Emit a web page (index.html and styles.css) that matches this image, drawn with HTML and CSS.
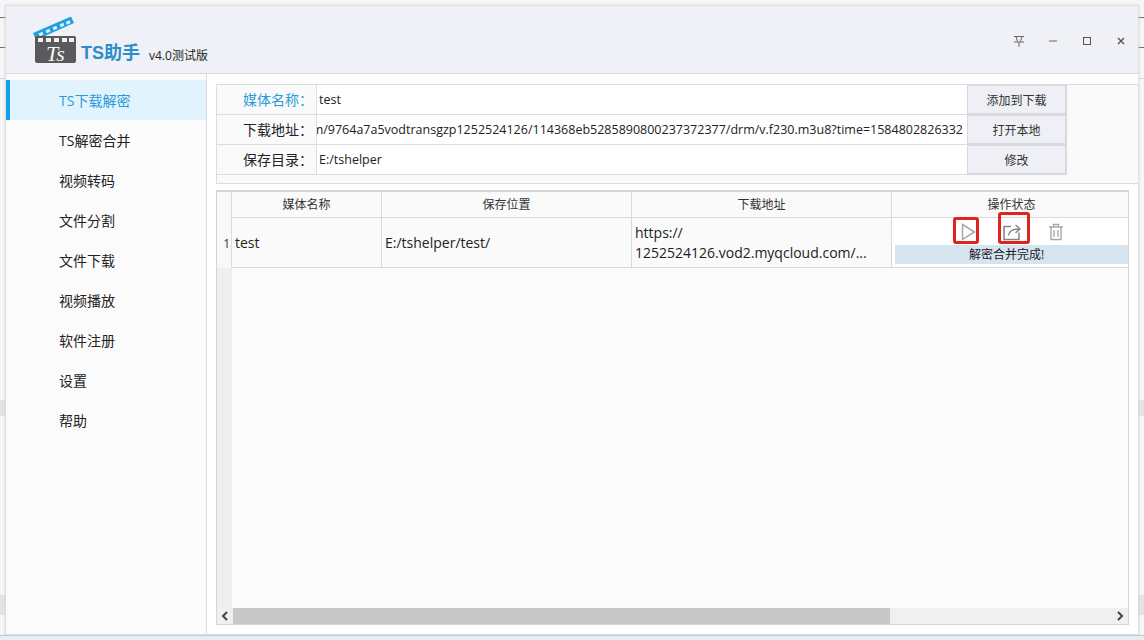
FILE: index.html
```html
<!DOCTYPE html>
<html lang="zh">
<head>
<meta charset="utf-8">
<title>TS助手</title>
<link rel="stylesheet" href="styles.css">
</head>
<body>
<div class="window">
  <header class="titlebar">
    <div class="brand">
      <svg class="logo" width="46" height="50" viewBox="0 0 46 50">
        <polygon points="0,17 38,0.500 41,7 3,24" fill="#1f9fe0"/>
        <g fill="#e8f2fa">
          <rect x="6" y="16.500" width="4" height="3" transform="rotate(-24 8 18)"/>
          <rect x="13" y="13.500" width="4" height="3" transform="rotate(-24 15 15)"/>
          <rect x="20" y="10.500" width="4" height="3" transform="rotate(-24 22 12)"/>
          <rect x="27" y="7.500" width="4" height="3" transform="rotate(-24 29 9)"/>
          <rect x="33" y="5" width="4" height="3" transform="rotate(-24 35 6)"/>
        </g>
        <rect x="2" y="20" width="41" height="27" rx="2" fill="#5a5a5c"/>
        <g fill="#f0f0f0">
          <rect x="5" y="22" width="5" height="4"/>
          <rect x="13" y="22" width="5" height="4"/>
          <rect x="21" y="22" width="5" height="4"/>
          <rect x="29" y="22" width="5" height="4"/>
          <rect x="36" y="22" width="5" height="4"/>
        </g>
        <text x="13" y="45" class="logo-text">Ts</text>
      </svg>
      <span class="app-name">TS助手</span>
      <span class="app-version">v4.0测试版</span>
    </div>
    <div class="controls">
      <svg width="12" height="12" viewBox="0 0 12 12"><path d="M1 1.500h10M3 1.500l1.500 5M9 1.500l-1.500 5M1 7h10M6 7v5" fill="none" stroke="#666" stroke-width="1"/></svg>
      <svg width="12" height="12" viewBox="0 0 12 12"><path d="M2 6h8" stroke="#666" stroke-width="1"/></svg>
      <svg width="12" height="12" viewBox="0 0 12 12"><rect x="2.500" y="2.500" width="7" height="7" fill="none" stroke="#555" stroke-width="1"/></svg>
      <svg width="12" height="12" viewBox="0 0 12 12"><path d="M3 3l6 6M9 3l-6 6" stroke="#555" stroke-width="1.400"/></svg>
    </div>
  </header>
  <div class="body">
    <nav class="sidebar">
      <a class="nav-item active">TS下载解密</a>
      <a class="nav-item">TS解密合并</a>
      <a class="nav-item">视频转码</a>
      <a class="nav-item">文件分割</a>
      <a class="nav-item">文件下载</a>
      <a class="nav-item">视频播放</a>
      <a class="nav-item">软件注册</a>
      <a class="nav-item">设置</a>
      <a class="nav-item">帮助</a>
    </nav>
    <main class="content">
      <section class="form">
        <div class="label accent">媒体名称：</div>
        <div class="field">test</div>
        <button class="btn">添加到下载</button>
        <div class="label">下载地址：</div>
        <div class="field url"><span>https://1252524126.vod2.myqcloud.com/9764a7a5vodtransgzp1252524126/114368eb5285890800237372377/drm/v.f230.m3u8?time=1584802826332</span></div>
        <button class="btn">打开本地</button>
        <div class="label">保存目录：</div>
        <div class="field">E:/tshelper</div>
        <button class="btn">修改</button>
      </section>
      <section class="table">
        <div class="grid">
          <div class="corner"></div>
          <div class="head">媒体名称</div>
          <div class="head">保存位置</div>
          <div class="head">下载地址</div>
          <div class="head">操作状态</div>
          <div class="rownum">1</div>
          <div class="cell">test</div>
          <div class="cell">E:/tshelper/test/</div>
          <div class="cell link">https://<br>1252524126.vod2.myqcloud.com/...</div>
          <div class="cell ops">
            <div class="icons">
              <svg class="icon-play" width="18" height="18" viewBox="0 0 18 18"><path d="M3.500 1.500L15.500 9 3.500 16.500Z" fill="none" stroke="#a8a8a8" stroke-width="1.500"/></svg>
              <svg class="icon-share" width="20" height="18" viewBox="0 0 20 18"><path d="M9 3.500H2v13h15v-7" fill="none" stroke="#858585" stroke-width="1.500"/><path d="M6.500 12.500c.5-4 4-6.500 10.500-6.500M13.500 2l4.500 4-4.500 4" fill="none" stroke="#858585" stroke-width="1.400"/></svg>
              <svg class="icon-trash" width="16" height="18" viewBox="0 0 16 18"><path d="M1 4h14M5.500 4V1.500h5V4M3 4v12.500h10V4M6 7v7M10 7v7" fill="none" stroke="#a8a8a8" stroke-width="1.400"/></svg>
            </div>
            <div class="status">解密合并完成!</div>
            <span class="mark mark-play"></span>
            <span class="mark mark-share"></span>
          </div>
        </div>
        <div class="rail"></div>
        <div class="scrollbar">
          <svg class="arrow" width="16" height="16" viewBox="0 0 16 16"><path d="M10 4L6 8l4 4" fill="none" stroke="#444" stroke-width="2"/></svg>
          <div class="track"><div class="thumb"></div></div>
          <svg class="arrow" width="16" height="16" viewBox="0 0 16 16"><path d="M6 4l4 4-4 4" fill="none" stroke="#444" stroke-width="2"/></svg>
        </div>
      </section>
    </main>
  </div>
</div>
</body>
</html>
```
FILE: styles.css
```css
* { box-sizing: border-box; }
html, body { height: 100%; }
body {
  margin: 0;
  padding: 6px;
  background-color: #f6f6f6;
  background-image:
    linear-gradient(#707070, #707070),
    linear-gradient(#707070, #707070),
    linear-gradient(#d8d8d8, #d8d8d8),
    linear-gradient(#e3e3e3, #e3e3e3),
    linear-gradient(#e3e3e3, #e3e3e3),
    linear-gradient(#b9c6d3, #b9c6d3),
    linear-gradient(#e9eef3, #e9eef3);
  background-repeat: no-repeat;
  background-size: 100% 1px, 100% 1px, 100% 1px, 100% 16px, 100% 20px, 100% 1px, 100% 5px;
  background-position: 0 17px, 0 47px, 0 78px, 0 400px, 0 595px, 0 635px, 0 636px;
  font-family: "Open Sans", "Noto Sans CJK SC", sans-serif;
  font-size: 13px;
  color: #222;
  overflow: hidden;
}
.window {
  height: 628px;
  display: flex;
  flex-direction: column;
  background: #fff;
  box-shadow: 0 0 2px 1px #d6d6d6;
}
.titlebar {
  height: 68px;
  flex: none;
  background: #f0f1f6;
  border-bottom: 1px solid #d9d9d9;
  display: flex;
  justify-content: space-between;
  align-items: flex-start;
}
.brand {
  display: flex;
  align-items: flex-end;
  padding: 9px 0 0 27px;
  height: 60px;
}
.logo { flex: none; margin-right: 2px; }
.logo-text {
  font-family: "Liberation Serif", serif;
  font-style: italic;
  font-size: 22px;
  fill: #f6f6f6;
}
.app-name {
  font-size: 18px;
  font-weight: 700;
  line-height: 24px;
  color: #2b8ecb;
  font-family: "Liberation Sans", "Noto Sans CJK SC", sans-serif;
  margin-bottom: 1px;
}
.app-version {
  font-size: 12px;
  line-height: 16px;
  margin-left: 9px;
  color: #222;
  margin-bottom: 2px;
}
.controls {
  display: flex;
  gap: 22px;
  padding: 29px 11px 0 0;
}
.body {
  flex: 1;
  display: flex;
  min-height: 0;
}
.sidebar {
  width: 201px;
  flex: none;
  padding-top: 6px;
  background: #fbfbfc;
  border-right: 1px solid #dcdcdc;
  display: flex;
  flex-direction: column;
}
.nav-item {
  height: 40px;
  line-height: 42px;
  padding-left: 53px;
  font-size: 14px;
  color: #222;
}
.nav-item.active {
  background: #e1f3fd;
  color: #2a9ad8;
  border-left: 4px solid #12a0ea;
  padding-left: 49px;
}
.content {
  flex: 1;
  min-width: 0;
  padding: 10px 9px 9px 9px;
  display: flex;
  flex-direction: column;
  gap: 6px;
}
.form {
  flex: none;
  height: 100px;
  margin-right: -9px;
  display: grid;
  grid-template-columns: 100px 650px 100px;
  grid-template-rows: 30px 30px 30px;
  border-top: 1px solid #dddddd;
  border-left: 1px solid #dddddd;
  border-bottom: 1px solid #dddddd;
  background: #fafafa;
}
.label {
  background: #fafafa;
  border-bottom: 1px solid #dddddd;
  border-right: 1px solid #dddddd;
  text-align: right;
  padding-right: 3px;
  line-height: 29px;
  font-size: 14px;
  white-space: nowrap;
}
.label.accent { color: #2a9ad8; }
.field {
  background: #fff;
  border-bottom: 1px solid #dddddd;
  padding: 0 4px 0 2px;
  line-height: 29px;
  font-size: 12.500px;
  white-space: nowrap;
  overflow: hidden;
}
.field.url {
  display: flex;
  justify-content: flex-end;
}
.field.url span { flex: none; }
.btn {
  margin: 0;
  padding: 0;
  font: inherit;
  font-size: 12px;
  color: #333;
  background: #eef0f6;
  border: 2px solid #d8d8de;
  border-top-width: 1px;
  border-left-width: 1px;
}
.table {
  flex: 1;
  min-height: 0;
  border: 1px solid #d4d4d4;
  border-top-width: 2px;
  background: #fbfbfb;
  display: grid;
  grid-template-columns: 15px 1fr;
  grid-template-rows: 76px 1fr 16px;
}
.grid {
  grid-column: 1 / 3;
  display: grid;
  grid-template-columns: 15px 150px 250px 260px 1fr;
  grid-template-rows: 26px 50px;
}
.corner, .rownum {
  background: #f8f8f8;
  border-right: 1px solid #dcdcdc;
}
.rownum {
  display: flex;
  align-items: center;
  justify-content: flex-end;
  padding-right: 1px;
  font-size: 12px;
  color: #333;
}
.head {
  background: #fafafa;
  border-right: 1px solid #d8d8d8;
  border-bottom: 1px solid #d8d8d8;
  text-align: center;
  line-height: 25px;
  font-size: 12px;
  color: #333;
}
.head:nth-child(5) { border-right: none; padding-left: 3px; }
.cell {
  background: #fafafa;
  border-right: 1px solid #d8d8d8;
  border-bottom: 1px solid #d8d8d8;
  padding: 0 3px;
  display: flex;
  align-items: center;
  font-size: 14px;
}
.cell.link {
  display: block;
  padding-top: 5px;
  line-height: 20px;
  white-space: nowrap;
}
.cell.ops {
  background: #fff;
  border-right: none;
  position: relative;
  display: block;
  padding: 0 0 0 3px;
}
.icons {
  height: 27px;
  display: flex;
  align-items: center;
  padding-left: 64px;
}
.icon-play { flex: none; }
.icon-share { flex: none; margin-left: 25px; }
.icon-trash { flex: none; margin-left: 26px; }
.status {
  height: 19px;
  line-height: 19px;
  text-align: center;
  padding-right: 10px;
  font-size: 12px;
  background: #d6e4f0;
  color: #222;
}
.mark {
  position: absolute;
  border: 3px solid #dc261c;
  border-radius: 3px;
}
.mark-play { left: 61px; top: -1px; width: 26px; height: 27px; }
.mark-share { left: 106px; top: -6px; width: 32px; height: 32px; }
.rail {
  background: #efefef;
}
.scrollbar {
  grid-column: 1 / 3;
  display: flex;
  background: #f0f0f0;
  align-items: stretch;
}
.arrow { flex: none; }
.track { flex: 1; display: flex; }
.thumb { width: 657px; background: #c8c8c8; }
```
